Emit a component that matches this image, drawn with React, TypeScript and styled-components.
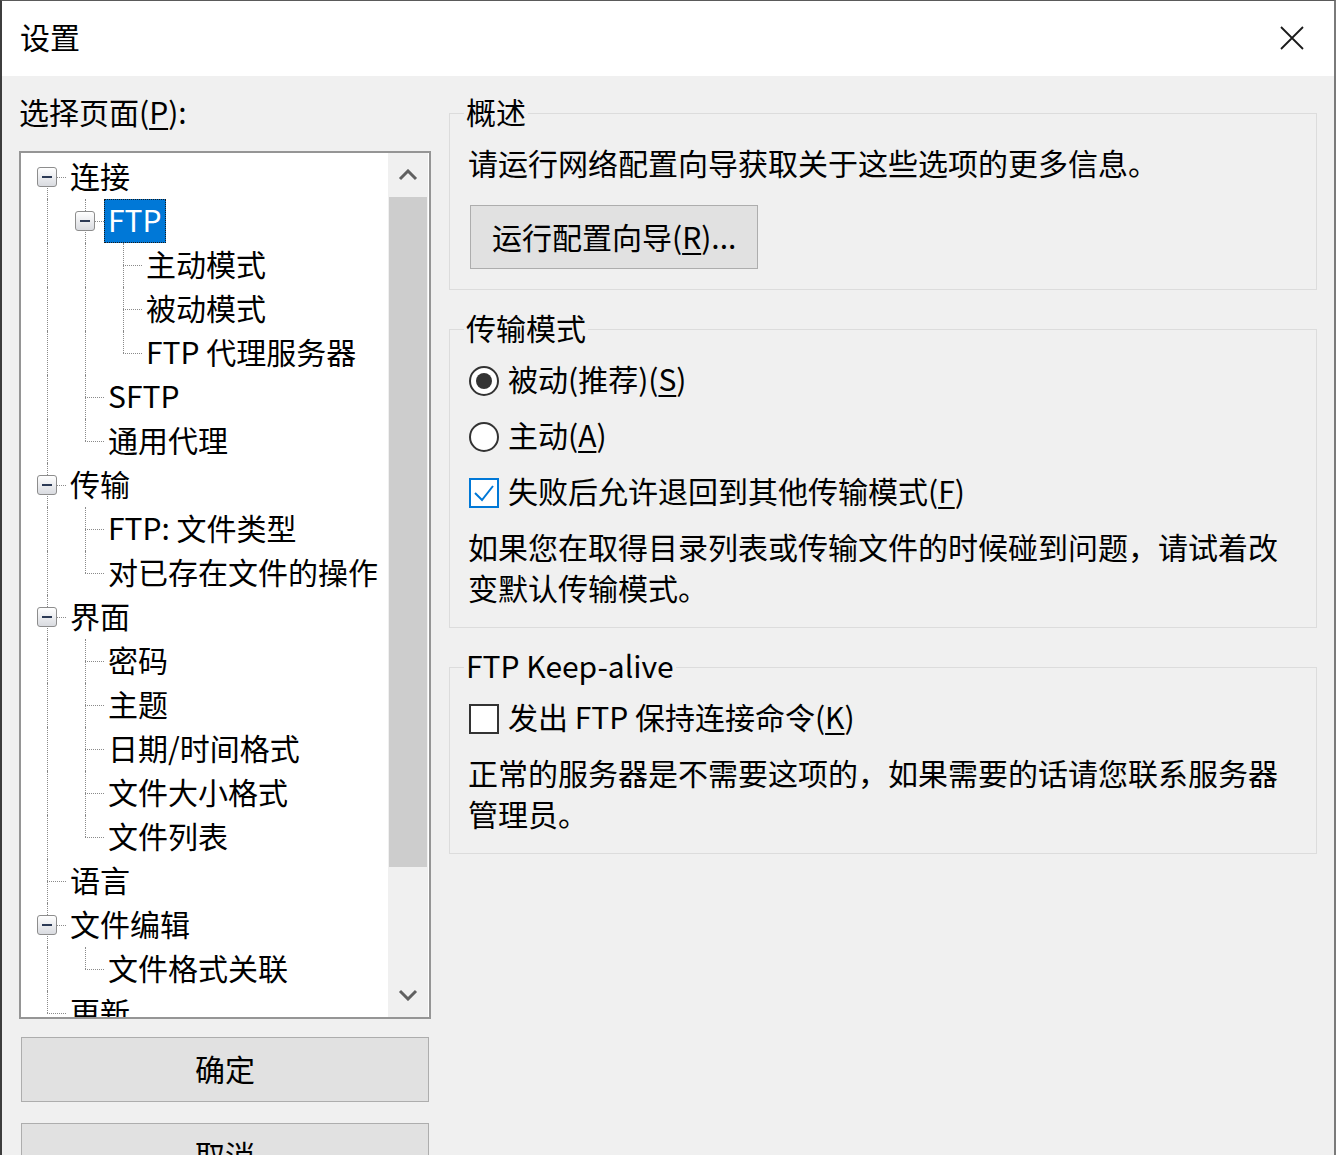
import React from 'react';
import styled, { createGlobalStyle } from 'styled-components';

type TreeNode = {
    label: string
    selected?: boolean
    children?: TreeNode[]
}

type FlatRow = {
    label: string
    selected: boolean
    level: number
    ancestors: boolean[]
    hasNext: boolean
    hasPrev: boolean
    expandable: boolean
}

const tree: TreeNode[] = [
    {
        label: '连接', children: [
            {label: 'FTP', selected: true, children: [{label: '主动模式'}, {label: '被动模式'}, {label: 'FTP 代理服务器'}]},
            {label: 'SFTP'},
            {label: '通用代理'},
        ]
    },
    {label: '传输', children: [{label: 'FTP: 文件类型'}, {label: '对已存在文件的操作'}]},
    {
        label: '界面', children: [
            {label: '密码'}, {label: '主题'}, {label: '日期/时间格式'}, {label: '文件大小格式'}, {label: '文件列表'},
        ]
    },
    {label: '语言'},
    {label: '文件编辑', children: [{label: '文件格式关联'}]},
    {label: '更新'},
];

const flatten = (nodes: TreeNode[], level: number, ancestors: boolean[], out: FlatRow[]) => {
    nodes.forEach((node, i) => {
        const hasNext = i < nodes.length - 1;
        out.push({
            label: node.label,
            selected: !!node.selected,
            level,
            ancestors,
            hasNext,
            hasPrev: !(level === 0 && i === 0),
            expandable: !!node.children,
        });
        if (node.children) flatten(node.children, level + 1, [...ancestors, hasNext], out);
    });
    return out;
};

const rows = flatten(tree, 0, [], []);

const GlobalStyle = createGlobalStyle`
  html, body {
    margin: 0;
    padding: 0;
    overflow: hidden;
    background: #f0f0f0;
  }
  body {
    font-family: "Noto Sans CJK SC", "Noto Sans", sans-serif;
  }
`
const Window = styled.div`
  width: 1336px;
  height: 1155px;
  box-sizing: border-box;
  border-left: 2px solid #3d3d3d;
  border-right: 2px solid #7a7a7a;
  border-top: 1px solid #5a5a5a;
  background: #f0f0f0;
  overflow: hidden;
  display: flex;
  flex-direction: column;
  font-size: 30px;
  color: #000;
`
const TitleBar = styled.div`
  flex: none;
  height: 75px;
  box-sizing: border-box;
  padding: 0 30px 1px 18px;
  background: #fff;
  display: flex;
  align-items: center;
  justify-content: space-between;
`
const Title = styled.span`
  line-height: 36px;
  padding-bottom: 4px;
`
const CloseButton = styled.span`
  display: inline-flex;
  width: 24px;
  height: 24px;
`
const Body = styled.div`
  display: flex;
  gap: 18px;
  padding: 17px 17px 0 17px;
`
const LeftColumn = styled.div`
  flex: none;
  width: 412px;
  display: flex;
  flex-direction: column;
`
const PageLabel = styled.div`
  line-height: 36px;
  height: 40px;
  box-sizing: border-box;
  padding-bottom: 4px;
  margin-bottom: 18px;
`
const Mnemonic = styled.span`
  text-decoration: underline;
  text-decoration-thickness: 2px;
  text-underline-offset: 4px;
`
const TreeBox = styled.div`
  height: 868px;
  box-sizing: border-box;
  border: 2px solid #959595;
  background: #fff;
  display: flex;
`
const TreeList = styled.div`
  flex: 1;
  overflow: hidden;
  padding: 2px 0 0 7px;
`
const TreeRow = styled.div`
  display: flex;
  align-items: center;
  height: 44px;
  white-space: nowrap;
`
const GuideCell = styled.span<{ $up?: boolean; $down?: boolean; $branch?: boolean }>`
  position: relative;
  flex: none;
  width: 38px;
  height: 44px;
  &::before {
    content: '';
    display: ${p => (p.$up || p.$down ? 'block' : 'none')};
    position: absolute;
    left: 19px;
    top: ${p => (p.$up ? '0' : '22px')};
    bottom: ${p => (p.$down ? '0' : '22px')};
    border-left: 1px dotted #8a8a8a;
  }
  &::after {
    content: '';
    display: ${p => (p.$branch ? 'block' : 'none')};
    position: absolute;
    left: 19px;
    right: 0;
    top: 22px;
    border-top: 1px dotted #8a8a8a;
  }
`
const Expander = styled.span`
  position: absolute;
  z-index: 1;
  left: 9px;
  top: 12px;
  width: 20px;
  height: 20px;
  box-sizing: border-box;
  border: 1px solid #8d8d8d;
  border-radius: 3px;
  background: linear-gradient(#ffffff, #d9dbe0);
  &::after {
    content: '';
    position: absolute;
    left: 4px;
    top: 8px;
    width: 10px;
    height: 2px;
    background: #2c3a55;
  }
`
const NodeLabel = styled.span<{ $selected?: boolean }>`
  height: 44px;
  box-sizing: border-box;
  line-height: 38px;
  padding: 0 3px 4px;
  border: 1px ${p => (p.$selected ? 'dotted #1a1a1a' : 'solid transparent')};
  background: ${p => (p.$selected ? '#0078d7' : 'transparent')};
  color: ${p => (p.$selected ? '#fff' : '#000')};
`
const ScrollBar = styled.div`
  flex: none;
  width: 40px;
  margin-right: 1px;
  background: #f0f0f0;
  display: flex;
  flex-direction: column;
`
const ScrollArrow = styled.div`
  flex: none;
  height: 44px;
  display: flex;
  align-items: center;
  justify-content: center;
`
const ScrollTrack = styled.div`
  flex: 1;
`
const ScrollThumb = styled.div`
  height: 670px;
  margin: 0 1px;
  background: #cdcdcd;
`
const ButtonStack = styled.div`
  margin-top: 18px;
  display: flex;
  flex-direction: column;
  gap: 21px;
`
const PushButton = styled.button<{ $wide?: boolean }>`
  font: inherit;
  color: #000;
  height: ${p => (p.$wide ? '65px' : '64px')};
  width: ${p => (p.$wide ? '408px' : 'auto')};
  margin: ${p => (p.$wide ? '0 2px' : '20px 0 0 2px')};
  padding: 0 21px 3px;
  line-height: 40px;
  background: #e1e1e1;
  border: 1px solid #adadad;
  border-radius: 0;
  align-self: flex-start;
`
const RightColumn = styled.div`
  flex: none;
  width: 868px;
  display: flex;
  flex-direction: column;
  gap: 19px;
`
const Group = styled.fieldset<{ $bottom: number }>`
  margin: 0;
  border: 1px solid #dcdcdc;
  padding: 11px 18px ${p => p.$bottom}px 18px;
  display: flex;
  flex-direction: column;
  align-items: flex-start;
`
const GroupTitle = styled.legend`
  padding: 0 2px 4px;
  margin-left: -4px;
  line-height: 36px;
`
const TextLine = styled.div`
  line-height: 37px;
  padding-bottom: 4px;
`
const Paragraph = styled.p<{ $top: number }>`
  margin: ${p => p.$top - 2}px 0 0;
  padding-bottom: 2px;
  line-height: 41px;
  width: 830px;
`
const OptionList = styled.div`
  display: flex;
  flex-direction: column;
  gap: 15px;
`
const OptionRow = styled.label`
  display: flex;
  align-items: center;
  gap: 9px;
  height: 41px;
  padding-left: 1px;
`
const OptionText = styled.span`
  line-height: 37px;
  padding-bottom: 4px;
`
const RadioCircle = styled.span<{ $checked?: boolean }>`
  flex: none;
  width: 30px;
  height: 30px;
  box-sizing: border-box;
  border: 2px solid #333;
  border-radius: 50%;
  background: #fff;
  display: flex;
  align-items: center;
  justify-content: center;
  &::after {
    content: '';
    display: ${p => (p.$checked ? 'block' : 'none')};
    width: 16px;
    height: 16px;
    border-radius: 50%;
    background: #333;
  }
`
const CheckBox = styled.span<{ $checked?: boolean }>`
  flex: none;
  width: 30px;
  height: 30px;
  box-sizing: border-box;
  border: 2px solid ${p => (p.$checked ? '#0078d7' : '#333')};
  background: #fff;
  display: flex;
  align-items: center;
  justify-content: center;
`

const CloseIcon = () => (
    <svg width="24" height="24" viewBox="0 0 24 24">
        <path d="M1 1 L23 23 M23 1 L1 23" stroke="#1a1a1a" strokeWidth="1.8" fill="none"/>
    </svg>
);

const Chevron = ({up}: { up: boolean }) => (
    <svg width="20" height="12" viewBox="0 0 20 12">
        <polyline points={up ? '2,10 10,2 18,10' : '2,2 10,10 18,2'} stroke="#606060" strokeWidth="3"
                  fill="none" strokeLinejoin="miter"/>
    </svg>
);

const CheckMark = () => (
    <svg width="24" height="24" viewBox="0 0 24 24">
        <polyline points="3,12 10,19 21,5" stroke="#0078d7" strokeWidth="2" fill="none"/>
    </svg>
);

const App = () => {
    return (
        <>
            <GlobalStyle/>
            <Window>
                <TitleBar>
                    <Title>设置</Title>
                    <CloseButton><CloseIcon/></CloseButton>
                </TitleBar>
                <Body>
                    <LeftColumn>
                        <PageLabel>选择页面(<Mnemonic>P</Mnemonic>):</PageLabel>
                        <TreeBox>
                            <TreeList>
                                {rows.map((row, i) => (
                                    <TreeRow key={i}>
                                        {row.ancestors.map((line, j) => (
                                            <GuideCell key={j} $up={line} $down={line}/>
                                        ))}
                                        <GuideCell $up={row.hasPrev} $down={row.hasNext} $branch>
                                            {row.expandable && <Expander/>}
                                        </GuideCell>
                                        <NodeLabel $selected={row.selected}>{row.label}</NodeLabel>
                                    </TreeRow>
                                ))}
                            </TreeList>
                            <ScrollBar>
                                <ScrollArrow><Chevron up/></ScrollArrow>
                                <ScrollTrack><ScrollThumb/></ScrollTrack>
                                <ScrollArrow><Chevron up={false}/></ScrollArrow>
                            </ScrollBar>
                        </TreeBox>
                        <ButtonStack>
                            <PushButton $wide>确定</PushButton>
                            <PushButton $wide>取消</PushButton>
                        </ButtonStack>
                    </LeftColumn>
                    <RightColumn>
                        <Group $bottom={20}>
                            <GroupTitle>概述</GroupTitle>
                            <TextLine>请运行网络配置向导获取关于这些选项的更多信息。</TextLine>
                            <PushButton>运行配置向导(<Mnemonic>R</Mnemonic>)...</PushButton>
                        </Group>
                        <Group $bottom={17}>
                            <GroupTitle>传输模式</GroupTitle>
                            <OptionList>
                                <OptionRow>
                                    <RadioCircle $checked/>
                                    <OptionText>被动(推荐)(<Mnemonic>S</Mnemonic>)</OptionText>
                                </OptionRow>
                                <OptionRow>
                                    <RadioCircle/>
                                    <OptionText>主动(<Mnemonic>A</Mnemonic>)</OptionText>
                                </OptionRow>
                                <OptionRow>
                                    <CheckBox $checked><CheckMark/></CheckBox>
                                    <OptionText>失败后允许退回到其他传输模式(<Mnemonic>F</Mnemonic>)</OptionText>
                                </OptionRow>
                            </OptionList>
                            <Paragraph $top={15}>
                                如果您在取得目录列表或传输文件的时候碰到问题，请试着改变默认传输模式。
                            </Paragraph>
                        </Group>
                        <Group $bottom={17}>
                            <GroupTitle>FTP Keep-alive</GroupTitle>
                            <OptionRow>
                                <CheckBox/>
                                <OptionText>发出 FTP 保持连接命令(<Mnemonic>K</Mnemonic>)</OptionText>
                            </OptionRow>
                            <Paragraph $top={15}>
                                正常的服务器是不需要这项的，如果需要的话请您联系服务器管理员。
                            </Paragraph>
                        </Group>
                    </RightColumn>
                </Body>
            </Window>
        </>
    );
};

export default App;
